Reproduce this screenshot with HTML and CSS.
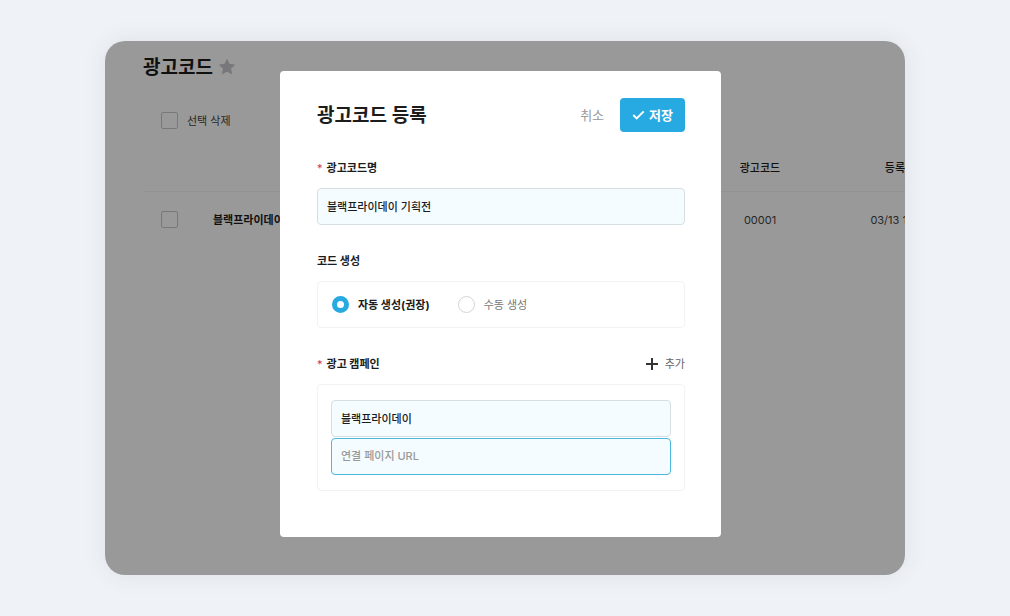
FILE: index.html
```html
<!DOCTYPE html>
<html lang="ko">
<head>
  <meta charset="UTF-8" />
  <meta name="viewport" content="width=device-width, initial-scale=1.0"/>
  <title>광고코드 등록</title>
  <link rel="stylesheet" href="styles.css">
</head>
<body>

  <main class="screen">

    <section class="list">
      <header class="list-header">
        <h1>광고코드</h1>
        <svg class="star" viewBox="0 0 18 18" aria-hidden="true">
          <path d="M9 1.6l2.2 4.7 5.2.7-3.8 3.6.9 5.1L9 13.2l-4.5 2.5.9-5.1L1.6 7l5.2-.7z"/>
        </svg>
      </header>

      <div class="list-tools">
        <input type="checkbox" id="check-all">
        <label for="check-all">선택 삭제</label>
      </div>

      <table class="code-table">
        <thead>
          <tr>
            <th class="col-check"></th>
            <th class="col-name"></th>
            <th class="col-data">광고코드</th>
            <th class="col-data">등록일</th>
          </tr>
        </thead>
        <tbody>
          <tr>
            <td class="col-check"><input type="checkbox" aria-label="선택"></td>
            <td class="col-name">블랙프라이데이</td>
            <td class="col-data">00001</td>
            <td class="col-data">03/13 17:20</td>
          </tr>
        </tbody>
      </table>
    </section>

    <div class="overlay">
      <form class="modal" role="dialog" aria-labelledby="modal-title">
        <header class="modal-header">
          <h2 id="modal-title">광고코드 등록</h2>
          <button type="button" class="cancel-btn">취소</button>
          <button type="button" class="save-btn">
            <svg viewBox="0 0 12 12" aria-hidden="true"><path d="M.8 6l3.4 3.4 7-7"/></svg>
            저장
          </button>
        </header>

        <div class="field">
          <label class="field-label" for="code-name"><span class="required">*</span>광고코드명</label>
          <input type="text" class="text-input" id="code-name" value="블랙프라이데이 기획전">
        </div>

        <div class="field" role="radiogroup" aria-labelledby="create-label">
          <div class="field-label" id="create-label">코드 생성</div>
          <div class="radio-box">
            <label class="radio"><input type="radio" name="create" checked><span>자동 생성(권장)</span></label>
            <label class="radio"><input type="radio" name="create"><span>수동 생성</span></label>
          </div>
        </div>

        <div class="field">
          <div class="field-row">
            <label class="field-label" for="campaign"><span class="required">*</span>광고 캠페인</label>
            <button type="button" class="add-btn">
              <svg viewBox="0 0 12 12" aria-hidden="true"><path d="M6 0v12M0 6h12"/></svg>
              추가
            </button>
          </div>
          <div class="campaign-box">
            <input type="text" class="text-input" id="campaign" value="블랙프라이데이">
            <input type="text" class="text-input active" placeholder="연결 페이지 URL" aria-label="연결 페이지 URL">
          </div>
        </div>
      </form>
    </div>

  </main>

</body>
</html>
```

FILE: styles.css
```css
:root {
  --blue: #27aae1;
  --ink: #1c1c1c;
  --gray: #777;
  --field-bg: #f4fcff;
  --field-line: #d5dfe1;
  --box-line: #f1f2f2;
}

* {
  box-sizing: border-box;
  margin: 0;
  padding: 0;
}

body {
  font-family: Inter, 'Noto Sans CJK KR', sans-serif;
  font-size: 11px;
  line-height: 16px;
  background: #eff3f8;
  color: var(--ink);
  padding: 41px 105px;
}

button,
input {
  font: inherit;
  color: inherit;
}

button {
  background: none;
  border: none;
  cursor: pointer;
}

/* list and overlay share one grid cell */
.screen {
  display: grid;
  grid-template-columns: minmax(0, 1fr);
  border-radius: 20px;
  background: #fff;
  overflow: hidden;
  box-shadow: 0 0 24px rgba(60, 60, 40, 0.09);
}

.list,
.overlay {
  grid-area: 1 / 1;
}

.list {
  padding: 13px 0 0 38px;
}

.list-header {
  display: flex;
  align-items: center;
  gap: 5px;
  height: 26px;
}

h1,
h2 {
  font-size: 19px;
  line-height: 26px;
  padding-top: 2px;
  font-weight: 600;
}

.star {
  width: 18px;
  height: 18px;
  fill: #c8c8cc;
  stroke: #c8c8cc;
  stroke-width: 1;
  stroke-linejoin: round;
}

.list-tools {
  display: flex;
  align-items: center;
  gap: 9px;
  padding: 32px 0 30px 18px;
  color: #444;
}

input[type="checkbox"] {
  appearance: none;
  display: block;
  width: 17px;
  height: 17px;
  border: 1px solid #c8c8c8;
  border-radius: 2px;
}

.code-table {
  width: 827px;
  table-layout: fixed;
  border-collapse: collapse;
}

.code-table th {
  height: 32px;
  padding-bottom: 15px;
  vertical-align: bottom;
  border-bottom: 1px solid #f4f4f4;
  font-weight: 500;
}

.code-table td {
  height: 57px;
}

.code-table .col-check {
  width: 70px;
  padding-left: 18px;
}

.code-table .col-name {
  font-weight: 700;
}

.code-table .col-data {
  width: 140px;
  text-align: center;
}

.code-table td.col-data {
  color: #444;
}

.overlay {
  background: rgba(0, 0, 0, 0.4);
  padding: 30px 184px 38px 175px;
}

.modal {
  background: #fff;
  border-radius: 4px;
  padding: 27px 36px 46px 37px;
}

.modal-header {
  display: flex;
  align-items: center;
}

.modal-header h2 {
  flex: 1;
}

.cancel-btn,
.save-btn {
  font-size: 13px;
  height: 34px;
}

.cancel-btn {
  color: #999;
  padding: 0 16px;
}

.save-btn {
  display: flex;
  align-items: center;
  gap: 4px;
  padding: 0 12px;
  border-radius: 4px;
  background: var(--blue);
  color: #fff;
  font-weight: 700;
}

.save-btn svg,
.add-btn svg {
  width: 12px;
  height: 12px;
  fill: none;
  stroke: #fff;
  stroke-width: 2;
}

.save-btn svg {
  width: 13px;
}

.field {
  margin-top: 28px;
}

.field-label {
  display: block;
  font-weight: 700;
  margin-bottom: 12px;
}

.required {
  color: #d9363e;
  font-weight: 400;
  margin-right: 4px;
}

.text-input {
  display: block;
  width: 100%;
  height: 37px;
  padding: 0 9px 1px;
  border: 1px solid var(--field-line);
  border-radius: 4px;
  background: var(--field-bg);
  font-weight: 500;
  outline: none;
}

.text-input::placeholder {
  color: #999;
}

.text-input.active {
  border-color: #4bb8e0;
}

.radio-box,
.campaign-box {
  border: 1px solid var(--box-line);
  border-radius: 4px;
}

.radio-box {
  display: flex;
  align-items: center;
  gap: 28px;
  height: 47px;
  padding: 0 14px;
}

.radio {
  display: flex;
  align-items: center;
  gap: 9px;
  color: var(--gray);
}

.radio input {
  appearance: none;
  width: 17px;
  height: 17px;
  border: 1px solid #d5d5d5;
  border-radius: 50%;
}

.radio input:checked {
  border: 5px solid var(--blue);
}

.radio input:checked + span {
  color: var(--ink);
  font-weight: 700;
}

.field-row {
  display: flex;
  justify-content: space-between;
  align-items: flex-start;
}

.add-btn {
  display: flex;
  align-items: center;
  gap: 7px;
  color: #666;
}

.add-btn svg {
  stroke: #333;
}

.campaign-box {
  display: flex;
  flex-direction: column;
  gap: 1px;
  padding: 15px 13px;
}
```
